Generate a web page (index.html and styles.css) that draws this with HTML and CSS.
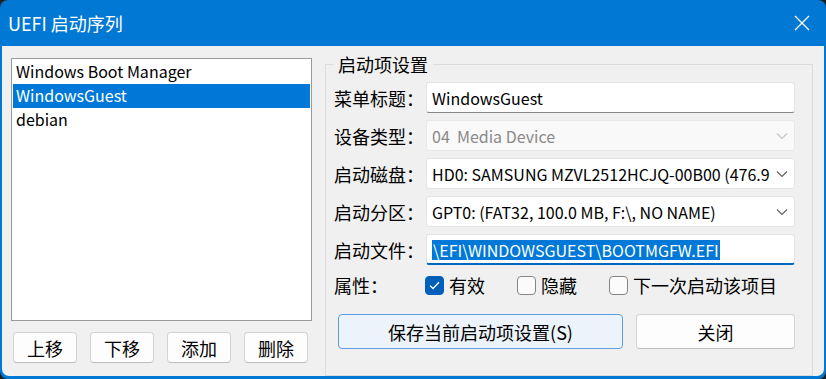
FILE: index.html
```html
<!DOCTYPE html>
<html lang="zh-CN">
<head>
  <meta charset="UTF-8" />
  <title>UEFI 启动序列</title>
  <link rel="stylesheet" href="styles.css">
</head>
<body>
  <div class="window">
    <!-- TITLE BAR -->
    <div class="titlebar">
      <span class="title">UEFI 启动序列</span>
      <svg class="close-x" width="16" height="16" viewBox="0 0 16 16">
        <path d="M1 1 L15 15 M15 1 L1 15" stroke="#fff" stroke-width="1.3" fill="none"/>
      </svg>
    </div>

    <div class="content">
      <!-- BOOT ENTRY LIST -->
      <div class="left">
        <div class="listbox">
          <div class="list-item">Windows Boot Manager</div>
          <div class="list-item active">WindowsGuest</div>
          <div class="list-item">debian</div>
        </div>
        <div class="list-buttons">
          <button class="btn small">上移</button>
          <button class="btn small">下移</button>
          <button class="btn small">添加</button>
          <button class="btn small">删除</button>
        </div>
      </div>

      <!-- ENTRY SETTINGS -->
      <fieldset class="group">
        <legend>启动项设置</legend>

        <div class="field">
          <label>菜单标题：</label>
          <div class="textbox"><span class="val">WindowsGuest</span></div>
        </div>
        <div class="field">
          <label>设备类型：</label>
          <div class="combo disabled">
            <span class="val">04&nbsp; Media Device</span>
            <svg width="12" height="8" viewBox="0 0 12 8"><path d="M1 1.5 L6 6.5 L11 1.5" stroke="#c4c4c4" stroke-width="1.1" fill="none"/></svg>
          </div>
        </div>
        <div class="field">
          <label>启动磁盘：</label>
          <div class="combo">
            <span class="val clip">HD0: SAMSUNG MZVL2512HCJQ-00B00 (476.9</span>
            <svg width="12" height="8" viewBox="0 0 12 8"><path d="M1 1.5 L6 6.5 L11 1.5" stroke="#5c5c5c" stroke-width="1.1" fill="none"/></svg>
          </div>
        </div>
        <div class="field">
          <label>启动分区：</label>
          <div class="combo">
            <span class="val">GPT0: (FAT32, 100.0 MB, F:\, NO NAME)</span>
            <svg width="12" height="8" viewBox="0 0 12 8"><path d="M1 1.5 L6 6.5 L11 1.5" stroke="#5c5c5c" stroke-width="1.1" fill="none"/></svg>
          </div>
        </div>
        <div class="field">
          <label>启动文件：</label>
          <div class="textbox focused"><span class="val selected">\EFI\WINDOWSGUEST\BOOTMGFW.EFI</span></div>
        </div>

        <div class="field checks">
          <label>属性：</label>
          <div class="check-list">
            <span class="check"><span class="box on">
              <svg width="11" height="9" viewBox="0 0 11 9"><path d="M1 4.6 L4 7.5 L10 1.3" stroke="#fff" stroke-width="1.3" fill="none"/></svg>
            </span>有效</span>
            <span class="check"><span class="box"></span>隐藏</span>
            <span class="check"><span class="box"></span>下一次启动该项目</span>
          </div>
        </div>

        <div class="actions">
          <button class="btn save">保存当前启动项设置(S)</button>
          <button class="btn close">关闭</button>
        </div>
      </fieldset>
    </div>
  </div>
</body>
</html>
```

FILE: styles.css
```css
/* BASE */
* { box-sizing:border-box; }
html, body { margin:0; height:100%; background:#1f1f1f; overflow:hidden; }
body { font-family:"Noto Sans CJK SC", "Noto Sans", sans-serif; font-size:18px; color:#000; }

/* WINDOW FRAME */
.window {
  width:826px; height:379px;
  background:#0078d4;
  border-radius:8px;
  display:flex; flex-direction:column;
  overflow:hidden;
}
.titlebar {
  height:46px; flex:none;
  display:flex; align-items:center; justify-content:space-between;
  padding:0 16px 0 8px;
  color:#fff;
}
.title { font-size:18px; line-height:24px; }

.content {
  flex:1;
  margin:0 2px 3px 2px;
  background:#f0f0f0;
  border-radius:0 0 7px 7px;
  display:flex; gap:13px;
  padding:6px 11px 0 9px;
}

/* LEFT: LIST */
.left { width:301px; display:flex; flex-direction:column; }
.listbox {
  margin-top:6px;
  height:263px;
  background:#fff;
  border:1px solid #9a9a9a;
  padding:1px;
}
.list-item { height:24px; line-height:23px; padding-left:3px; white-space:nowrap; font-size:16px; }
.list-item.active { background:#0078d7; color:#fff; }

.list-buttons { display:flex; gap:13px; margin-top:11px; padding-left:2px; }

/* BUTTONS */
.btn {
  font:inherit; color:#000;
  background:#fdfdfd;
  border:1px solid #d3d3d3; border-bottom-color:#bdbdbd;
  border-radius:4px;
  padding:0;
}
.btn.small { width:64px; height:31px; line-height:28px; }

/* RIGHT: GROUP */
.group {
  flex:1; margin:0; min-width:0;
  border:1px solid #dcdcdc;
  padding:6px 17px 11px 8px;
}
.group legend { padding:0 5px; margin-left:-1px; line-height:24px; }

.field { display:flex; align-items:center; height:31px; margin-bottom:7px; }
.field label { width:92px; flex:none; white-space:nowrap; }

.textbox, .combo {
  flex:1; height:31px; min-width:0;
  background:#fff;
  border:1px solid #e3e3e3;
  border-radius:3px;
  padding:0 5px;
  display:flex; align-items:center; gap:4px;
  white-space:nowrap; overflow:hidden;
}
.val { font-size:16px; min-width:0; }
.val.clip { overflow:hidden; }
.textbox { border-bottom:1px solid #868686; }
.textbox.focused { border-bottom:2px solid #0067c0; padding-top:1px; }
.selected { background:#0078d7; color:#fff; line-height:20px; padding:0 1px; }

.combo { justify-content:space-between; padding-right:6px; }
.combo svg { flex:none; }
.combo.disabled { background:#f9f9f9; border-color:#e8e8e8; color:#8a8a8a; }

/* CHECKBOXES */
.field.checks { height:26px; }
.check-list { display:flex; gap:32px; margin-left:-1px; }
.check { display:flex; align-items:center; gap:5px; }
.box {
  width:19px; height:19px;
  border:1px solid #858585; border-radius:4px;
  background:#fbfbfb;
  display:flex; align-items:center; justify-content:center;
}
.box.on { background:#005fb8; border-color:#005fb8; }

/* BOTTOM ACTIONS */
.actions { display:flex; gap:13px; margin-top:16px; padding-left:4px; }
.btn.save { width:285px; height:35px; background:#edf3fa; border:1px solid #5d9fe2; }
.btn.close { width:159px; height:35px; }
```
